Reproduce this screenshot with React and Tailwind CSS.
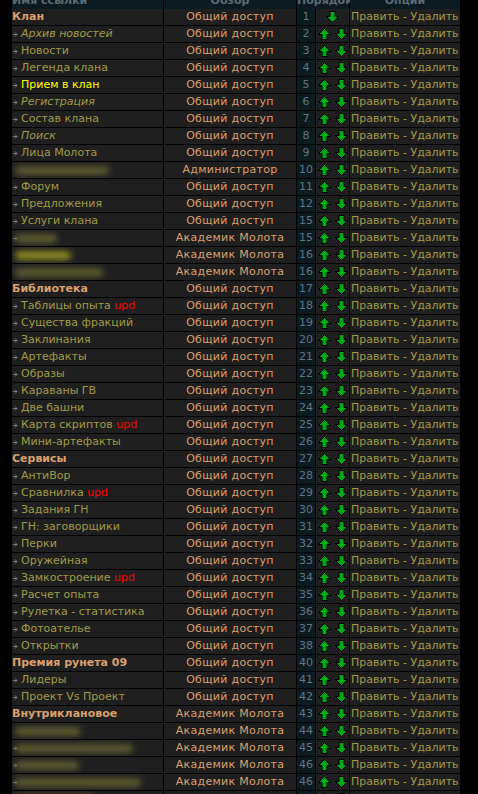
const rows = [
  { t: "Клан", g: true, n: 1, first: true },
  { t: "Архив новостей", i: true, n: 2 },
  { t: "Новости", n: 3 },
  { t: "Легенда клана", n: 4 },
  { t: "Прием в клан", y: true, n: 5 },
  { t: "Регистрация", i: true, n: 6 },
  { t: "Состав клана", n: 7 },
  { t: "Поиск", i: true, n: 8 },
  { t: "Лица Молота", n: 9 },
  { blur: 94, v: "Администратор", n: 10, nob: true },
  { t: "Форум", n: 11 },
  { t: "Предложения", n: 12 },
  { t: "Услуги клана", n: 15 },
  { blur: 42, v: "Академик Молота", n: 15 },
  { blur: 56, yb: true, v: "Академик Молота", n: 16, nob: true },
  { blur: 88, v: "Академик Молота", n: 16, nob: true },
  { t: "Библиотека", g: true, n: 17 },
  { t: "Таблицы опыта", upd: true, n: 18 },
  { t: "Существа фракций", n: 19 },
  { t: "Заклинания", n: 20 },
  { t: "Артефакты", n: 21 },
  { t: "Образы", n: 22 },
  { t: "Караваны ГВ", n: 23 },
  { t: "Две башни", n: 24 },
  { t: "Карта скриптов", upd: true, n: 25 },
  { t: "Мини-артефакты", n: 26 },
  { t: "Сервисы", g: true, n: 27 },
  { t: "АнтиВор", n: 28 },
  { t: "Сравнилка", upd: true, n: 29 },
  { t: "Задания ГН", n: 30 },
  { t: "ГН: заговорщики", n: 31 },
  { t: "Перки", n: 32 },
  { t: "Оружейная", n: 33 },
  { t: "Замкостроение", upd: true, n: 34 },
  { t: "Расчет опыта", n: 35 },
  { t: "Рулетка - статистика", n: 36 },
  { t: "Фотоателье", n: 37 },
  { t: "Открытки", n: 38 },
  { t: "Премия рунета 09", g: true, n: 40 },
  { t: "Лидеры", n: 41 },
  { t: "Проект Vs Проект", n: 42 },
  { t: "Внутриклановое", g: true, v: "Академик Молота", n: 43 },
  { blur: 66, v: "Академик Молота", n: 44, nob: true },
  { blur: 118, v: "Академик Молота", n: 45 },
  { blur: 64, v: "Академик Молота", n: 46 },
  { blur: 126, v: "Академик Молота", n: 46 },
  { blur: 80, v: "Академик Молота", n: 47 },
];

const Bullet = () => (
  <svg width="5" height="5" viewBox="0 0 5 5" className="ml-px shrink-0">
    <path d="M0 2.5H4M2 0.5L4 2.5L2 4.5" stroke="#7c7c7c" strokeWidth="1" fill="none" />
  </svg>
);

const Arrow = ({ down }) => (
  <svg width="13" height="12" viewBox="0 0 13 12">
    <path
      d={
        down
          ? "M6.5 11.5L0.5 5.5H4V0.5H9V5.5H12.5Z"
          : "M6.5 0.5L0.5 6.5H4V11.5H9V6.5H12.5Z"
      }
      fill="#00a818"
      stroke="#000"
      strokeWidth="1"
    />
  </svg>
);

const Row = ({ r }) => {
  const nameColor = r.y ? "text-[#ffff00]" : "text-[#a09a44]";
  return (
    <div className="grid h-4 grid-cols-[151px_132px_18px_33px_110px] gap-x-px">
      <div className="flex items-center overflow-hidden whitespace-nowrap bg-[#1f1f1f]">
        {r.g ? (
          <span className="font-bold text-[#d9a06e]">{r.t}</span>
        ) : r.blur ? (
          <>
            {r.nob ? <span className="w-[6px] shrink-0" /> : <Bullet />}
            <span
              className={`ml-[-3px] block h-[9px] shrink-0 rounded-full blur-[3px] ${
                r.yb ? "bg-[#8c8a22]" : "bg-[#5c5a30]"
              }`}
              style={{ width: r.blur }}
            />
          </>
        ) : (
          <>
            <Bullet />
            <span className={`ml-[3px] ${nameColor} ${r.i ? "italic" : ""}`}>
              {r.t}
              {r.upd && <span className="text-[#ff0000]"> upd</span>}
            </span>
          </>
        )}
      </div>
      <div className="bg-[#1f1f1f] text-center tracking-[0.3px] text-[#d9a06e]">
        {r.v || "Общий доступ"}
      </div>
      <div className="bg-[#0c1b22] text-center text-[#5f7682]">{r.n}</div>
      <div className="flex items-center justify-center gap-[4px] bg-[#1f1f1f]">
        {!r.first && <Arrow />}
        <Arrow down />
      </div>
      <div className="overflow-hidden whitespace-nowrap bg-[#1f1f1f] pl-px text-[#a09a44]">
        Править - Удалить
      </div>
    </div>
  );
};

export default function App() {
  return (
    <div className="h-[794px] overflow-hidden bg-black pl-3 font-['DejaVu_Sans',sans-serif] text-[11px] leading-4">
      <div className="mt-[-8px] flex w-[448px] flex-col gap-y-px bg-black">
        <div className="grid h-4 grid-cols-[151px_132px_52px_110px] gap-x-px font-bold text-[#5a6b73]">
          <div className="bg-[#0c1b22] pt-[1px]">Имя ссылки</div>
          <div className="bg-[#0c1b22] pt-[1px] text-center">Обзор</div>
          <div className="bg-[#0c1b22] pt-[1px] text-center">Порядок</div>
          <div className="bg-[#0c1b22] pt-[1px] text-center">Опции</div>
        </div>
        {rows.map((r, idx) => (
          <Row key={idx} r={r} />
        ))}
      </div>
    </div>
  );
}
